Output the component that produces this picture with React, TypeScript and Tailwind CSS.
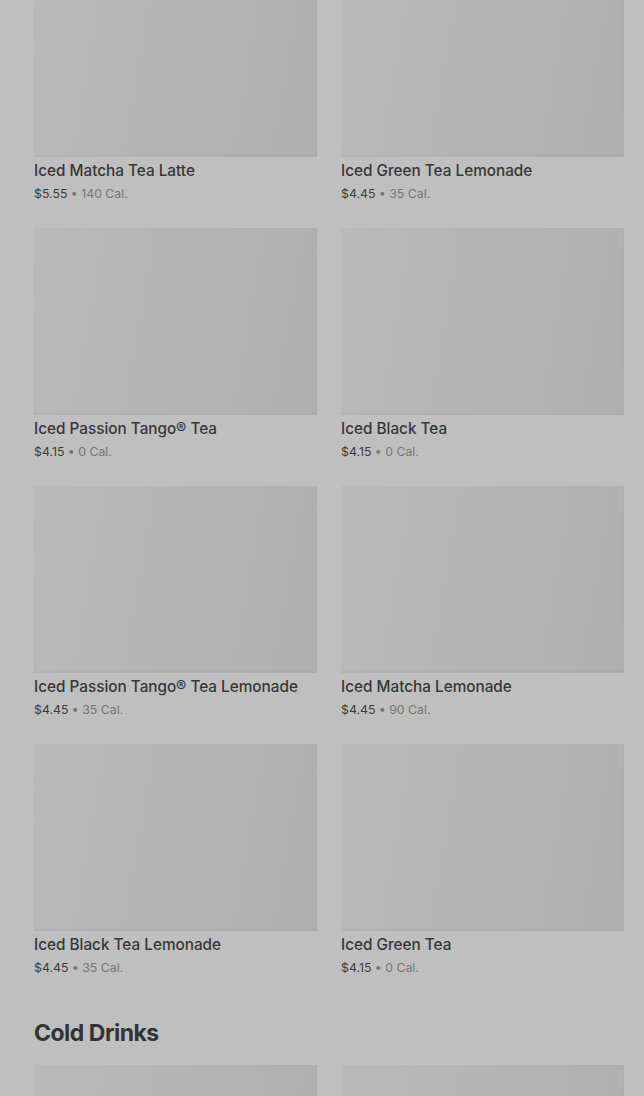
const teas = [
  { name: 'Iced Matcha Tea Latte', price: '$5.55', cal: '140 Cal.' },
  { name: 'Iced Green Tea Lemonade', price: '$4.45', cal: '35 Cal.' },
  { name: 'Iced Passion Tango® Tea', price: '$4.15', cal: '0 Cal.' },
  { name: 'Iced Black Tea', price: '$4.15', cal: '0 Cal.' },
  { name: 'Iced Passion Tango® Tea Lemonade', price: '$4.45', cal: '35 Cal.' },
  { name: 'Iced Matcha Lemonade', price: '$4.45', cal: '90 Cal.' },
  { name: 'Iced Black Tea Lemonade', price: '$4.45', cal: '35 Cal.' },
  { name: 'Iced Green Tea', price: '$4.15', cal: '0 Cal.' },
];

function Placeholder() {
  return (
    <div className="h-[187px] w-full bg-[linear-gradient(100deg,#bababa_0%,#b4b4b4_50%,#afafaf_100%)] shadow-[inset_0_-2px_2px_rgba(0,0,0,0.03)]" />
  );
}

function ItemCard({ name, price, cal }: { name: string; price: string; cal: string }) {
  return (
    <div>
      <Placeholder />
      <p className="mt-[4px] text-[15.3px] leading-[20px] font-medium text-[#373737]">{name}</p>
      <p className="mt-[4px] text-[12.3px] leading-[18px] text-[#3c3c3c]">
        {price}
        <span className="text-[#767676]"> • {cal}</span>
      </p>
    </div>
  );
}

export default function App() {
  return (
    <div
      className="h-[1096px] overflow-hidden bg-[#bfbfbf] pl-[34px] pr-[20px]"
      style={{ fontFamily: 'Inter, "Noto Sans", sans-serif' }}
    >
      <div className="-mt-[30px] grid grid-cols-2 gap-x-[24px] gap-y-[25px]">
        {teas.map((t) => (
          <ItemCard key={t.name} {...t} />
        ))}
      </div>
      <h2 className="mt-[42px] text-[23px] leading-[28px] font-bold tracking-[-0.5px] text-[#333333]">Cold Drinks</h2>
      <div className="mt-[18px] grid grid-cols-2 gap-x-[24px]">
        <Placeholder />
        <Placeholder />
      </div>
    </div>
  );
}
